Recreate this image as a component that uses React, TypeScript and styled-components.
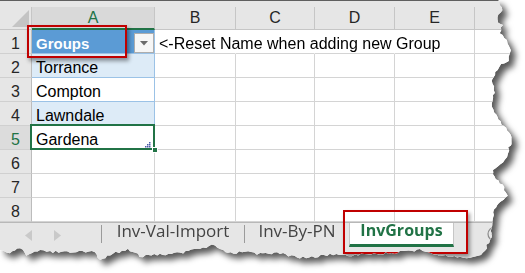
import React from "react";
import styled, { createGlobalStyle } from "styled-components";

const Global = createGlobalStyle`
  html, body { margin: 0; padding: 0; background: #ffffff; }
  body {
    width: 525px; height: 273px; overflow: hidden;
    font-family: "Liberation Sans", Arial, sans-serif;
  }
`;

type Pt = [number, number];

const RIGHT: Pt[] = [
  [498, 0], [502, 10], [497, 20], [503, 25], [500, 33], [507, 40], [510, 50],
  [508, 60], [502, 65], [495, 72], [493, 80], [495, 93], [492, 100], [493, 110],
  [498, 120], [508, 130], [512, 140], [508, 150], [505, 160], [493, 170],
  [492, 175], [502, 185], [507, 195], [497, 205], [493, 215], [493, 225],
  [490, 240], [486, 248], [481, 255],
];
const BOTTOM: Pt[] = [
  [470, 257], [460, 257], [440, 255], [420, 250], [400, 252], [380, 254],
  [355, 255], [330, 255], [300, 258], [280, 253], [260, 254], [245, 252],
  [225, 253], [215, 245], [200, 248], [180, 253], [160, 255], [140, 256],
  [128, 249], [110, 255], [100, 260], [95, 252], [70, 252], [50, 252],
  [40, 250], [27, 255], [20, 248], [10, 253], [0, 250],
];

function rough(points: Pt[], seed: number): Pt[] {
  const out: Pt[] = [];
  let k = seed;
  for (let i = 0; i < points.length - 1; i++) {
    const [x1, y1] = points[i];
    const [x2, y2] = points[i + 1];
    const d = Math.hypot(x2 - x1, y2 - y1) || 1;
    const steps = Math.max(1, Math.round(d / 3));
    const nx = -(y2 - y1) / d;
    const ny = (x2 - x1) / d;
    for (let s = 0; s < steps; s++) {
      const t = s / steps;
      const r = Math.sin(++k * 12.9898) * 43758.5453;
      const f = (r - Math.floor(r)) * 2 - 1;
      out.push([x1 + (x2 - x1) * t + nx * f * 1.3, y1 + (y2 - y1) * t + ny * f * 1.3]);
    }
  }
  out.push(points[points.length - 1]);
  return out;
}

const TORN = [[0, 0] as Pt, ...rough(RIGHT, 3), ...rough(BOTTOM, 71)]
  .map(([x, y]) => `${x.toFixed(1)}px ${y.toFixed(1)}px`)
  .join(", ");

const COLS = "32px 123px 81px 79px 80px 80px 1fr";
const GREEN = "#217346";
const GRID = "#d4d4d4";
const TABLE_LINE = "#9bc2e6";

const Stage = styled.div`
  width: 525px;
  height: 273px;
  filter: drop-shadow(5px 5px 3px rgba(0, 0, 0, 0.65));
`;

const Paper = styled.div`
  position: relative;
  width: 512px;
  height: 262px;
  box-sizing: border-box;
  background: #ffffff;
  border-top: 1px solid #5f5f5f;
  display: flex;
  flex-direction: column;
  clip-path: polygon(${TORN});
`;

const TopStrip = styled.div`
  height: 6px;
  flex: none;
  background: #e6e6e6;
`;

const Row = styled.div<{ $h: number }>`
  display: grid;
  flex: none;
  grid-template-columns: ${COLS};
  grid-template-rows: ${(p) => p.$h}px;
  height: ${(p) => p.$h}px;
`;

const HeadCell = styled.div<{ $active?: boolean }>`
  box-sizing: border-box;
  background: ${(p) => (p.$active ? "#d9d9d9" : "#e6e6e6")};
  border-right: 1px solid #c6c6c6;
  border-bottom: ${(p) => (p.$active ? `2px solid ${GREEN}` : "1px solid #c6c6c6")};
  color: ${(p) => (p.$active ? GREEN : "#262626")};
  font-size: 16px;
  line-height: 22px;
  text-align: center;
`;

const Corner = styled(HeadCell)`
  position: relative;
  &::after {
    content: "";
    position: absolute;
    right: 2px;
    bottom: 2px;
    width: 17px;
    height: 17px;
    background: #c4c4c4;
    clip-path: polygon(100% 0, 100% 100%, 0 100%);
  }
`;

const RowHead = styled.div<{ $active?: boolean }>`
  box-sizing: border-box;
  background: ${(p) => (p.$active ? "#dcdcdc" : "#e6e6e6")};
  border-right: 1px solid #bcbcbc;
  border-bottom: 1px solid #d0d0d0;
  color: ${(p) => (p.$active ? GREEN : "#262626")};
  font-size: 16px;
  line-height: 19px;
  padding-top: 4px;
  text-align: center;
`;

const Cell = styled.div<{ $bg?: string; $line?: string; $noRight?: boolean }>`
  box-sizing: border-box;
  position: relative;
  background-color: ${(p) => p.$bg ?? "#ffffff"};
  border-bottom: 1px solid ${(p) => p.$line ?? GRID};
  border-right: 1px solid ${(p) => (p.$noRight ? "transparent" : p.$line ?? GRID)};
  padding: 4px 0 0 4px;
  font-size: 16px;
  line-height: 19px;
  color: #000000;
  white-space: nowrap;
`;

const HeaderCell = styled(Cell)`
  display: flex;
  align-items: flex-start;
  padding: 3px 0 0 4px;
`;

const HeaderLabel = styled.span`
  flex: 1;
  padding-top: 1px;
  color: #ffffff;
  font-weight: bold;
  font-size: 15px;
`;

const DropButton = styled.div`
  box-sizing: border-box;
  width: 20px;
  height: 20px;
  background: #f6f6f6;
  border: 1px solid #adadad;
  display: flex;
  align-items: center;
  justify-content: center;
`;

const Note = styled.span`
  position: relative;
  z-index: 2;
`;

const Selected = styled(Cell)`
  &::after {
    content: "";
    position: absolute;
    top: -2px;
    left: -2px;
    right: -1px;
    bottom: -1px;
    border: 2px solid ${GREEN};
    z-index: 3;
  }
`;

const FillHandle = styled.span`
  position: absolute;
  right: -4px;
  bottom: -4px;
  width: 6px;
  height: 6px;
  box-sizing: border-box;
  background: ${GREEN};
  border: 1px solid #ffffff;
  z-index: 4;
`;

const ResizeMark = styled.svg`
  position: absolute;
  right: 3px;
  bottom: 1px;
  z-index: 4;
`;

const TabBar = styled.div`
  flex: 1;
  display: flex;
  align-items: flex-start;
  background: #e6e6e6;
  border-top: 1px solid #b8b8b8;
  font-family: "Open Sans", "Liberation Sans", sans-serif;
`;

const Nav = styled.div`
  box-sizing: border-box;
  width: 101px;
  display: flex;
  gap: 22px;
  padding: 7px 0 0 25px;
`;

const Sep = styled.div`
  width: 1px;
  height: 18px;
  margin-top: 2px;
  background: #9b9b9b;
`;

const Tab = styled.div<{ $w: number }>`
  width: ${(p) => p.$w}px;
  height: 24px;
  text-align: center;
  font-size: 17px;
  line-height: 15px;
  color: #444444;
  white-space: nowrap;
`;

const ActiveTab = styled.div`
  box-sizing: border-box;
  width: 105px;
  height: 24px;
  background: #ffffff;
  border-left: 1px solid #c6c6c6;
  border-right: 1px solid #c6c6c6;
  border-bottom: 3px solid ${GREEN};
  text-align: center;
  font-size: 16px;
  font-weight: bold;
  line-height: 15px;
  color: ${GREEN};
  white-space: nowrap;
`;

const AddSheet = styled.svg`
  margin: 3px 0 0 33px;
  flex: none;
`;

const Callout = styled.div<{ $x: number; $y: number; $w: number; $h: number }>`
  position: absolute;
  left: ${(p) => p.$x}px;
  top: ${(p) => p.$y}px;
  width: ${(p) => p.$w}px;
  height: ${(p) => p.$h}px;
  box-sizing: border-box;
  border: 2px solid #c00000;
  box-shadow: 2px 3px 4px rgba(0, 0, 0, 0.4);
  z-index: 6;
  pointer-events: none;
`;

const Arrow = ({ dir }: { dir: "l" | "r" }) => (
  <svg width="7" height="11" viewBox="0 0 7 11">
    <path d={dir === "l" ? "M7 0 L0 5.5 L7 11 Z" : "M0 0 L7 5.5 L0 11 Z"} fill="#c9c9c9" />
  </svg>
);

const Caret = () => (
  <svg width="8" height="5" viewBox="0 0 8 5">
    <path d="M0 0 H8 L4 4.5 Z" fill="#6b6b6b" />
  </svg>
);

const letters = ["A", "B", "C", "D", "E", ""];

type BodyRow = { n: number; a?: string; band?: boolean; selected?: boolean; table?: boolean };
const body: BodyRow[] = [
  { n: 2, a: "Torrance", band: true, table: true },
  { n: 3, a: "Compton", table: true },
  { n: 4, a: "Lawndale", band: true, table: true },
  { n: 5, a: "Gardena", selected: true, table: true },
  { n: 6 },
  { n: 7 },
  { n: 8 },
];

const EmptyCells = ({ count }: { count: number }) => (
  <>
    {Array.from({ length: count }).map((_, i) => (
      <Cell key={i} />
    ))}
  </>
);

export default function App() {
  return (
    <>
      <Global />
      <Stage>
        <Paper>
          <TopStrip />
          <Row $h={23}>
            <Corner />
            {letters.map((l, i) => (
              <HeadCell key={i} $active={i === 0}>
                {l}
              </HeadCell>
            ))}
          </Row>
          <Row $h={24}>
            <RowHead>1</RowHead>
            <HeaderCell $bg="#5b9bd5" $line={TABLE_LINE}>
              <HeaderLabel>Groups</HeaderLabel>
              <DropButton>
                <Caret />
              </DropButton>
            </HeaderCell>
            <Cell $noRight>
              <Note>&lt;-Reset Name when adding new Group</Note>
            </Cell>
            <Cell $noRight />
            <Cell $noRight />
            <Cell />
            <Cell />
          </Row>
          {body.map((r) => (
            <Row $h={24} key={r.n}>
              <RowHead $active={r.selected}>{r.n}</RowHead>
              {r.selected ? (
                <Selected $line={TABLE_LINE}>
                  {r.a}
                  <ResizeMark width="6" height="6" viewBox="0 0 6 6">
                    <rect x="4" y="0" width="1.5" height="1.5" fill="#4a5aa8" />
                    <rect x="2" y="2" width="1.5" height="1.5" fill="#4a5aa8" />
                    <rect x="4" y="2" width="1.5" height="1.5" fill="#4a5aa8" />
                    <rect x="0" y="4" width="1.5" height="1.5" fill="#4a5aa8" />
                    <rect x="2" y="4" width="1.5" height="1.5" fill="#4a5aa8" />
                    <rect x="4" y="4" width="1.5" height="1.5" fill="#4a5aa8" />
                  </ResizeMark>
                  <FillHandle />
                </Selected>
              ) : (
                <Cell $bg={r.band ? "#ddebf7" : "#ffffff"} $line={r.table ? TABLE_LINE : GRID}>
                  {r.a}
                </Cell>
              )}
              <EmptyCells count={5} />
            </Row>
          ))}
          <TabBar>
            <Nav>
              <Arrow dir="l" />
              <Arrow dir="r" />
            </Nav>
            <Sep />
            <Tab $w={142}>Inv-Val-Import</Tab>
            <Sep />
            <Tab $w={104}>Inv-By-PN</Tab>
            <ActiveTab>InvGroups</ActiveTab>
            <AddSheet width="16" height="16" viewBox="0 0 16 16">
              <circle cx="8" cy="8" r="7" fill="none" stroke="#8a8a8a" strokeWidth="1.2" />
              <path d="M8 4.5 V11.5 M4.5 8 H11.5" stroke="#8a8a8a" strokeWidth="1.2" />
            </AddSheet>
          </TabBar>
          <Callout $x={27} $y={24} $w={100} $h={33} />
          <Callout $x={343} $y={209} $w={125} $h={44} />
        </Paper>
      </Stage>
    </>
  );
}
